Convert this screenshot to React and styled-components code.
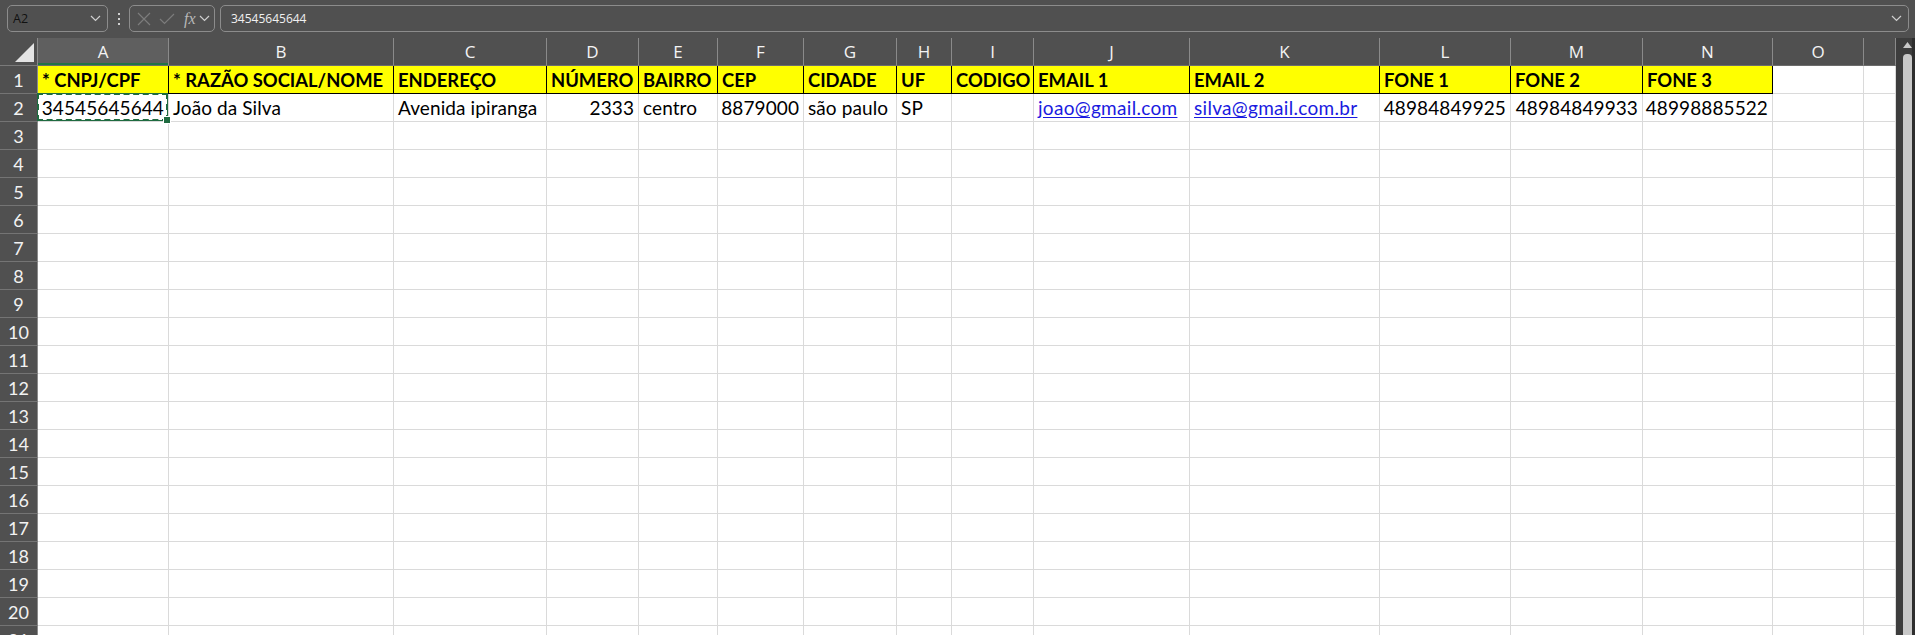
import React from 'react'
import styled, { createGlobalStyle, css } from 'styled-components'

const GlobalStyle = createGlobalStyle`
  html, body {
    margin: 0;
    padding: 0;
    background: #505050;
    overflow: hidden;
  }
  * { box-sizing: border-box; }
`

const COLUMNS = [
  { name: 'A', width: 131 },
  { name: 'B', width: 225 },
  { name: 'C', width: 153 },
  { name: 'D', width: 92 },
  { name: 'E', width: 79 },
  { name: 'F', width: 86 },
  { name: 'G', width: 93 },
  { name: 'H', width: 55 },
  { name: 'I', width: 82 },
  { name: 'J', width: 156 },
  { name: 'K', width: 190 },
  { name: 'L', width: 131 },
  { name: 'M', width: 132 },
  { name: 'N', width: 130 },
  { name: 'O', width: 91 },
  { name: '', width: 32 },
]

const HEADERS = [
  '* CNPJ/CPF', '* RAZÃO SOCIAL/NOME', 'ENDEREÇO', 'NÚMERO', 'BAIRRO', 'CEP',
  'CIDADE', 'UF', 'CODIGO', 'EMAIL 1', 'EMAIL 2', 'FONE 1', 'FONE 2', 'FONE 3',
]

const RECORD = [
  { value: '34545645644', number: true, active: true },
  { value: 'João da Silva' },
  { value: 'Avenida ipiranga' },
  { value: '2333', number: true },
  { value: 'centro' },
  { value: '8879000', number: true },
  { value: 'são paulo' },
  { value: 'SP' },
  { value: '' },
  { value: 'joao@gmail.com', link: true },
  { value: 'silva@gmail.com.br', link: true },
  { value: '48984849925', number: true },
  { value: '48984849933', number: true },
  { value: '48998885522', number: true },
]

const ROW_COUNT = 22

const Window = styled.div`
  width: 1915px;
  height: 635px;
  display: flex;
  flex-direction: column;
  background: #505050;
  overflow: hidden;
`

const FormulaBar = styled.div`
  height: 38px;
  flex: none;
  display: flex;
  align-items: flex-start;
  padding: 5px 6px 0 7px;
`

const Field = styled.div`
  height: 27px;
  border: 1px solid #8c8c8c;
  border-radius: 5px;
  display: flex;
  align-items: center;
`

const NameBox = styled(Field)`
  width: 101px;
  padding: 0 6px 0 5px;
  justify-content: space-between;
  font-family: 'Open Sans', sans-serif;
  font-size: 12.5px;
  color: #111;
`

const Dots = styled.div`
  width: 21px;
  height: 27px;
  display: flex;
  flex-direction: column;
  align-items: center;
  justify-content: center;
  gap: 3px;

  span {
    width: 2px;
    height: 2px;
    background: #d0d0d0;
  }
`

const FuncBox = styled(Field)`
  width: 86px;
  padding: 0 4px 0 7px;
  gap: 8px;
`

const FxLabel = styled.span`
  font-family: 'Liberation Serif', serif;
  font-style: italic;
  font-size: 16px;
  color: #b8b8b8;
  margin-left: 1px;
  margin-right: -5px;
`

const FormulaInput = styled(Field)`
  flex: 1;
  margin-left: 5px;
  padding: 0 6px 0 10px;
  justify-content: space-between;
  font-family: 'Open Sans', sans-serif;
  font-size: 12px;
  color: #f0f0f0;
`

const SheetArea = styled.div`
  flex: 1;
  display: flex;
  min-height: 0;
`

const Sheet = styled.div`
  flex: 1;
  display: grid;
  grid-template-columns: 38px ${COLUMNS.map((c) => `${c.width}px`).join(' ')};
  grid-auto-rows: 28px;
  overflow: hidden;
  background: #ffffff;
  align-content: start;
`

const Corner = styled.div`
  background: #505050;
  border-right: 1px solid #8a8a8a;
  border-bottom: 1px solid #7a7a7a;
  display: flex;
  align-items: flex-end;
  justify-content: flex-end;
  padding: 0 3px 3px 0;
`

const ColHead = styled.div`
  background: ${(p) => (p.$selected ? '#5f5f5f' : '#505050')};
  border-right: 1px solid #8a8a8a;
  border-bottom: 1px solid #6c6c6c;
  display: flex;
  align-items: center;
  justify-content: center;
  font-family: 'Open Sans', sans-serif;
  font-size: 17px;
  color: #f4f4f4;
  ${(p) => p.$selected && css`
    box-shadow: inset 0 -2px 0 #217346;
  `}
`

const RowHead = styled.div`
  background: #505050;
  border-right: 1px solid #8a8a8a;
  border-bottom: 1px solid #747474;
  display: flex;
  align-items: center;
  justify-content: center;
  font-family: Lato, sans-serif;
  font-size: 18px;
  color: #f2f2f2;
`

const Cell = styled.div`
  position: relative;
  background: #ffffff;
  border-right: 1px solid #dadada;
  border-bottom: 1px solid #dadada;
  display: flex;
  align-items: center;
  justify-content: ${(p) => (p.$number ? 'flex-end' : 'flex-start')};
  padding: 0 ${(p) => (p.$number ? 4 : 3)}px 0 4px;
  font-family: Lato, sans-serif;
  font-size: 19px;
  letter-spacing: 0.1px;
  color: #000;
  white-space: nowrap;

  ${(p) => p.$heading && css`
    background: #ffff00;
    border-right-color: #000;
    border-bottom-color: #000;
    font-size: 18.4px;
    letter-spacing: 0;
    font-weight: 700;
  `}

  ${(p) => p.$active && css`
    &::after {
      content: '';
      position: absolute;
      inset: -1px 0 0 -1px;
      border: 2px dashed #1f6b40;
      outline: 1px solid #1f6b40;
      outline-offset: -1px;
      pointer-events: none;
    }
    &::before {
      content: '';
      position: absolute;
      right: -3px;
      bottom: -3px;
      width: 6px;
      height: 6px;
      background: #1f6b40;
      border: 1px solid #fff;
      z-index: 2;
    }
  `}
`

const Link = styled.span`
  color: #1a1ae0;
  letter-spacing: 0.3px;
  text-decoration: underline;
  text-underline-offset: 2px;
`

const ScrollTrack = styled.div`
  width: 19px;
  flex: none;
  background: #3d3d3d;
  border-right: 3px solid #2e2e2e;
  padding: 4px 0 0 7px;
  display: flex;
  flex-direction: column;
  gap: 6px;
`

const Thumb = styled.div`
  flex: 1;
  width: 9px;
  background: #c8c8c8;
  border-radius: 4px 4px 0 0;
`

const Chevron = ({ color = '#cfcfcf' }) => (
  <svg width="11" height="7" viewBox="0 0 11 7">
    <path d="M1 1 L5.5 5.5 L10 1" fill="none" stroke={color} strokeWidth="1.2" />
  </svg>
)

const CancelIcon = () => (
  <svg width="14" height="14" viewBox="0 0 14 14">
    <path d="M1 1 L13 13 M13 1 L1 13" stroke="#7c7c7c" strokeWidth="1.2" />
  </svg>
)

const EnterIcon = () => (
  <svg width="16" height="12" viewBox="0 0 16 12">
    <path d="M1 6 L5.5 10.5 L15 1" fill="none" stroke="#7c7c7c" strokeWidth="1.2" />
  </svg>
)

const CornerTriangle = () => (
  <svg width="19" height="19" viewBox="0 0 19 19">
    <polygon points="0,19 19,19 19,0" fill="#e4e4e4" />
  </svg>
)

const UpArrow = () => (
  <svg width="9" height="6" viewBox="0 0 9 6">
    <polygon points="4.5,0 9,6 0,6" fill="#c8c8c8" />
  </svg>
)

function renderCell(row, colIndex) {
  const key = `${row}-${colIndex}`
  if (row === 1 && colIndex < HEADERS.length) {
    return <Cell key={key} $heading>{HEADERS[colIndex]}</Cell>
  }
  if (row === 2 && colIndex < RECORD.length) {
    const item = RECORD[colIndex]
    return (
      <Cell key={key} $number={item.number} $active={item.active}>
        {item.link ? <Link>{item.value}</Link> : item.value}
      </Cell>
    )
  }
  return <Cell key={key} />
}

export default function App() {
  const rows = Array.from({ length: ROW_COUNT }, (_, i) => i + 1)

  return (
    <Window>
      <GlobalStyle />
      <FormulaBar>
        <NameBox>
          <span>A2</span>
          <Chevron />
        </NameBox>
        <Dots><span /><span /><span /></Dots>
        <FuncBox>
          <CancelIcon />
          <EnterIcon />
          <FxLabel>fx</FxLabel>
          <Chevron />
        </FuncBox>
        <FormulaInput>
          <span>34545645644</span>
          <Chevron />
        </FormulaInput>
      </FormulaBar>
      <SheetArea>
        <Sheet>
          <Corner><CornerTriangle /></Corner>
          {COLUMNS.map((c, i) => (
            <ColHead key={`h${i}`} $selected={c.name === 'A'}>{c.name}</ColHead>
          ))}
          {rows.map((r) => (
            <React.Fragment key={r}>
              <RowHead>{r}</RowHead>
              {COLUMNS.map((_, i) => renderCell(r, i))}
            </React.Fragment>
          ))}
        </Sheet>
        <ScrollTrack>
          <UpArrow />
          <Thumb />
        </ScrollTrack>
      </SheetArea>
    </Window>
  )
}
